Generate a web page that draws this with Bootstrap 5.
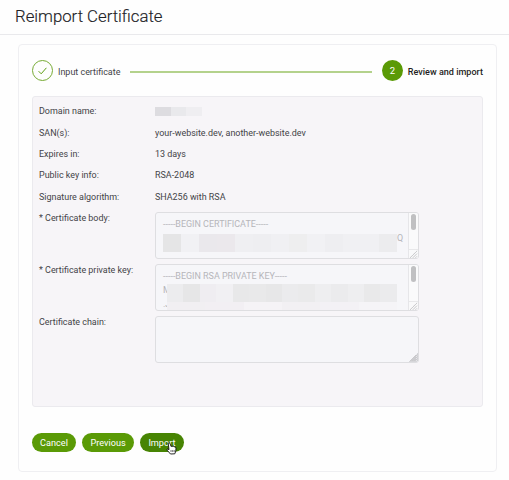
<!DOCTYPE html>
<html lang="en">
<head>
<meta charset="utf-8">
<meta name="viewport" content="width=device-width, initial-scale=1">
<title>Reimport Certificate</title>
<link href="https://cdn.jsdelivr.net/npm/bootstrap@5.3.0/dist/css/bootstrap.min.css" rel="stylesheet">
<style>
body{font-family:Roboto,"Liberation Sans",sans-serif;font-size:8.95px;line-height:14px;color:#434347;background:#fefefe;overflow:hidden}
.page-head{height:35px;border-bottom:1px solid #e9e9ec;padding:0 15px}
.page-head h1{font-size:16.75px;line-height:33px;font-weight:300;color:#202024;-webkit-text-stroke:.15px #202024}
.wizard{margin:9px 12px 0 18px;height:428px;padding:15px 13px 0;border:1px solid #efeff2;border-radius:4px}
.step-dot{width:21px;height:21px;border-radius:50%;background:#5a9a06;color:#fff;font-size:9.5px}
.step-dot.done{background:none;border:1px solid #76aa33}
.step-line{height:2px;background:#b4d28c;margin:2px 10px 0 10px}
.step-text{margin-left:5px;padding-top:2px}
.step-text.now{font-weight:500;font-size:9.05px;color:#1f1f23}
.panel{height:311px;margin-top:15px;border:1px solid #ebeaee;border-radius:3px;background:#f7f5f8;padding:7.4px 6px}
.item{height:21.35px}
.item-label{width:116px;flex:none}
.field-row{height:52px}
.field{width:264px;height:47px;margin-top:.7px;border:1px solid #dedee1;border-radius:3px;background:#f6f6f9;color:#b5b5b9;overflow:hidden}
.field-text{padding:4px 0 0 7px}
.track{width:10px;height:100%;border-left:1px solid #e6e6e9;background:#fafafb}
.thumb{width:5px;height:16px;border-radius:3px;background:#c0c0c2;margin:1px 0 0 2px}
.grip{width:9px;height:9px;display:block}
.track .grip{border-top:1px solid #e8e8ea;background:#f9f9fa}
.mosaic{display:flex}
.mosaic i{flex:1}
.m-domain{width:47px;height:9px;margin-top:3px}
.m-body{width:234px;height:18px;margin-top:3px}
.m-key{width:230px;height:18px;margin-top:1px}
.m-tail{width:230px;height:8px}
.key-start{width:4px;flex:none}
.actions{margin-top:26px;gap:6.5px}
.actions .btn{--bs-btn-color:#fff;--bs-btn-bg:#5a9a06;--bs-btn-hover-bg:#4a8505;--bs-btn-hover-color:#fff;font-size:9.15px;line-height:20px;height:19px;padding:0 8.1px;border:0;border-radius:10px}
.actions .active{--bs-btn-active-bg:#478403;--bs-btn-active-color:#fff}
.hand{left:26px;top:9px}
</style>
<script src="https://cdn.jsdelivr.net/npm/bootstrap@5.3.0/dist/js/bootstrap.bundle.min.js"></script>
</head>
<body>
<header class="page-head"><h1 class="m-0">Reimport Certificate</h1></header>
<main class="wizard">
  <div class="d-flex align-items-center">
    <span class="step-dot done d-flex align-items-center justify-content-center"><svg width="9" height="8" viewBox="0 0 9 8" fill="none" stroke="#5f9e16"><path d="M.6 4.2 3.2 6.8 8.4.8"/></svg></span>
    <span class="step-text">Input certificate</span>
    <span class="step-line flex-grow-1"></span>
    <span class="step-dot d-flex align-items-center justify-content-center">2</span>
    <span class="step-text now">Review and import</span>
  </div>
  <section class="panel">
    <div class="item d-flex"><span class="item-label">Domain name:</span><span class="mosaic m-domain"><i style="background:#dddce0"></i><i style="background:#e9e9ec"></i><i style="background:#efeef1"></i></span></div>
    <div class="item d-flex"><span class="item-label">SAN(s):</span><span>your-website.dev, another-website.dev</span></div>
    <div class="item d-flex"><span class="item-label">Expires in:</span><span>13 days</span></div>
    <div class="item d-flex"><span class="item-label">Public key info:</span><span>RSA-2048</span></div>
    <div class="item d-flex"><span class="item-label">Signature algorithm:</span><span>SHA256 with RSA</span></div>
    <div class="field-row d-flex"><span class="item-label">* Certificate body:</span>
      <div class="field d-flex">
        <div class="field-text flex-grow-1">-----BEGIN CERTIFICATE-----
          <div class="d-flex"><span class="mosaic m-body flex-shrink-0"><i style="background:#e5e5e6"></i><i style="background:#f1f1f4"></i><i style="background:#eae8ec"></i><i style="background:#ebe8ec"></i><i style="background:#efeff2"></i><i style="background:#eeeef1"></i><i style="background:#f0f0f3"></i><i style="background:#eeeeef"></i><i style="background:#f1f1f4"></i><i style="background:#eeeef1"></i><i style="background:#f0f0f3"></i><i style="background:#f0f0f3"></i><i style="background:#ececee"></i></span><span>Q</span></div>
        </div>
        <div class="track d-flex flex-column justify-content-between"><span class="thumb"></span><svg class="grip" viewBox="0 0 9 9" stroke="#a2a2a6" stroke-dasharray="1 .5"><path d="M1 8.5 8.5 1M4 8.5 8.5 4M7 8.5 8.5 7"/></svg></div>
      </div>
    </div>
    <div class="field-row d-flex"><span class="item-label">* Certificate private key:</span>
      <div class="field d-flex">
        <div class="field-text flex-grow-1">-----BEGIN RSA PRIVATE KEY-----
          <div class="d-flex"><span class="key-start">M<br>.J</span><div><div class="mosaic m-key"><i style="background:#ececee"></i><i style="background:#e6e6e7"></i><i style="background:#efedf1"></i><i style="background:#f1f0f3"></i><i style="background:#e8e8e9"></i><i style="background:#e9e9ea"></i><i style="background:#e7e7e8"></i><i style="background:#ebebed"></i><i style="background:#eaeaeb"></i><i style="background:#eeeef0"></i><i style="background:#ebebed"></i><i style="background:#eeeef0"></i><i style="background:#e9e9ea"></i><i style="background:#ebebed"></i></div><div class="mosaic m-tail"><i style="background:#f1eff2"></i><i style="background:#f2eff3"></i><i style="background:#f5f3f6"></i><i style="background:#f2f0f3"></i><i style="background:#f3f1f5"></i><i style="background:#f5f4f7"></i></div></div></div>
        </div>
        <div class="track d-flex flex-column justify-content-between"><span class="thumb"></span><svg class="grip" viewBox="0 0 9 9" stroke="#a2a2a6" stroke-dasharray="1 .5"><path d="M1 8.5 8.5 1M4 8.5 8.5 4M7 8.5 8.5 7"/></svg></div>
      </div>
    </div>
    <div class="field-row d-flex"><span class="item-label">Certificate chain:</span>
      <div class="field d-flex justify-content-end align-items-end"><svg class="grip" viewBox="0 0 9 9" stroke="#77777c" stroke-dasharray="1 .4"><path d="M1 8.5 8.5 1M3 8.5 8.5 3M5 8.5 8.5 5M7 8.5 8.5 7"/></svg></div>
    </div>
  </section>
  <div class="actions d-flex">
    <button class="btn" type="button">Cancel</button>
    <button class="btn" type="button">Previous</button>
    <button class="btn active position-relative" type="button">Import<svg class="hand position-absolute" width="11" height="13" viewBox="0 0 11 13"><path d="M2.2 1.2Q3.2.3 4 1.4L5 4.4 6 4.1 6.8 4.5 7.8 4.2 8.5 4.8 9.4 4.9 10 6 9.8 9 8.8 11.8 4.5 12 1.1 8.2Q.5 7 1.8 7L3 7.7Z" fill="#fff" stroke="#111" stroke-width=".9"/><path d="M5 8v2M6.7 8v2M8.2 8v2" stroke="#111" stroke-width=".6"/></svg></button>
  </div>
</main>
</body>
</html>
